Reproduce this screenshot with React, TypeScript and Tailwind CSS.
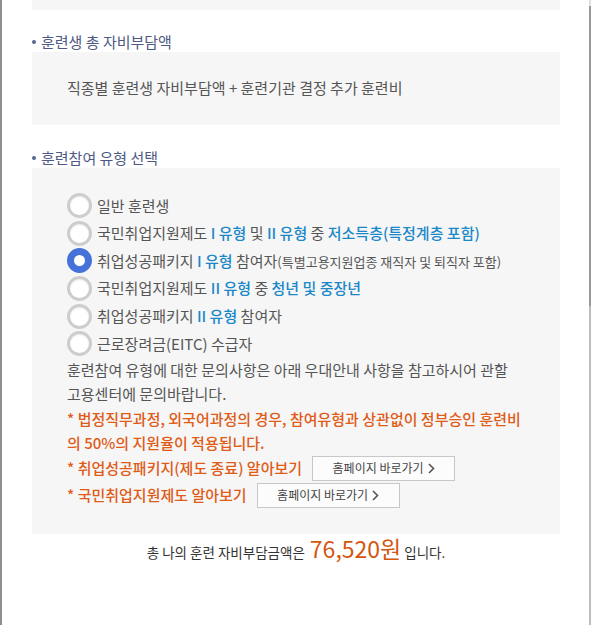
import React from "react";

function Radio({ checked }: { checked?: boolean }) {
  return checked ? (
    <span className="shrink-0 w-[25px] h-[25px] rounded-full border-[7px] border-[#4472d9] bg-white" />
  ) : (
    <span className="shrink-0 w-[25px] h-[25px] rounded-full border-[3px] border-[#cdcdcd] bg-white shadow-[inset_0_1px_2px_rgba(0,0,0,0.08)]" />
  );
}

function Chevron() {
  return (
    <svg width="7" height="11" viewBox="0 0 7 11" className="ml-[4px]">
      <polyline points="1,1 5.5,5.5 1,10" fill="none" stroke="#555" strokeWidth="1.6" />
    </svg>
  );
}

function LinkButton() {
  return (
    <button className="ml-[10px] w-[143px] h-[25px] border border-[#c8c8c8] bg-[#fcfcfc] flex items-center justify-center text-[12px] text-[#444] leading-none font-normal">
      홈페이지 바로가기
      <Chevron />
    </button>
  );
}

export default function App() {
  const B = "text-[#1b88c8] font-medium";
  return (
    <div className="flex w-[591px] h-[625px] bg-white overflow-hidden font-['Noto_Sans_CJK_KR','Noto_Sans',sans-serif]">
      <div className="w-[2px] shrink-0 bg-[#8e8e8e]" />
      <div className="flex-1 flex flex-col pl-[30px] pr-[29px]">
        <div className="h-[10px] bg-[#f6f6f6]" />

        <div className="mt-[22px] h-[20px] flex items-center text-[15px] text-[#4e5984]">
          <span className="w-[4px] h-[4px] rounded-full bg-[#5a6690] mr-[5px]" />
          훈련생 총 자비부담액
        </div>
        <div className="h-[73px] bg-[#f6f6f6] flex items-center pl-[35px] text-[15px] text-[#555]">
          직종별 훈련생 자비부담액 + 훈련기관 결정 추가 훈련비
        </div>

        <div className="mt-[23px] h-[20px] flex items-center text-[15px] text-[#4e5984]">
          <span className="w-[4px] h-[4px] rounded-full bg-[#5a6690] mr-[5px]" />
          훈련참여 유형 선택
        </div>
        <div className="bg-[#f6f6f6] pt-[24px] pb-[26px] pl-[35px] pr-[10px] text-[15px] text-[#555]">
          <div className="flex flex-col">
            <label className="h-[27.6px] flex items-center gap-[5px] whitespace-nowrap">
              <Radio />
              <span>일반 훈련생</span>
            </label>
            <label className="h-[27.6px] flex items-center gap-[5px] whitespace-nowrap">
              <Radio />
              <span>
                국민취업지원제도 <span className={B}>I 유형</span> 및{" "}
                <span className={B}>II 유형</span> 중{" "}
                <span className={B}>저소득층(특정계층 포함)</span>
              </span>
            </label>
            <label className="h-[27.6px] flex items-center gap-[5px] whitespace-nowrap">
              <Radio checked />
              <span>
                취업성공패키지 <span className={B}>I 유형</span> 참여자
                <span className="text-[13px]">(특별고용지원업종 재직자 및 퇴직자 포함)</span>
              </span>
            </label>
            <label className="h-[27.6px] flex items-center gap-[5px] whitespace-nowrap">
              <Radio />
              <span>
                국민취업지원제도 <span className={B}>II 유형</span> 중{" "}
                <span className={B}>청년 및 중장년</span>
              </span>
            </label>
            <label className="h-[27.6px] flex items-center gap-[5px] whitespace-nowrap">
              <Radio />
              <span>
                취업성공패키지 <span className={B}>II 유형</span> 참여자
              </span>
            </label>
            <label className="h-[27.6px] flex items-center gap-[5px] whitespace-nowrap">
              <Radio />
              <span>근로장려금(EITC) 수급자</span>
            </label>
          </div>

          <p className="leading-[24.6px] whitespace-nowrap">
            훈련참여 유형에 대한 문의사항은 아래 우대안내 사항을 참고하시어 관할
            <br />
            고용센터에 문의바랍니다.
          </p>
          <p className="leading-[24.6px] whitespace-nowrap text-[#e05b17] font-medium">
            * 법정직무과정, 외국어과정의 경우, 참여유형과 상관없이 정부승인 훈련비
            <br />의 50%의 지원율이 적용됩니다.
          </p>
          <div className="h-[25px] flex items-center text-[#e05b17] font-medium whitespace-nowrap">
            * 취업성공패키지(제도 종료) 알아보기
            <LinkButton />
          </div>
          <div className="mt-[2px] h-[25px] flex items-center text-[#e05b17] font-medium whitespace-nowrap">
            * 국민취업지원제도 알아보기
            <LinkButton />
          </div>
        </div>

        <div className="h-[32px] flex items-baseline justify-center pt-[3px] text-[13.5px] text-[#333] whitespace-nowrap">
          <span>총 나의 훈련 자비부담금액은</span>
          <span className="ml-[5px] mr-[3px] text-[23px] text-[#d4560f] leading-none">76,520원</span>
          <span>입니다.</span>
        </div>
      </div>
      <div className="w-[2px] shrink-0 flex flex-col">
        <div className="h-[6px] bg-[#e0e0e0]" />
        <div className="h-[300px] bg-[#9a9a9a]" />
        <div className="flex-1 bg-[#bdbdbd]" />
      </div>
    </div>
  );
}
